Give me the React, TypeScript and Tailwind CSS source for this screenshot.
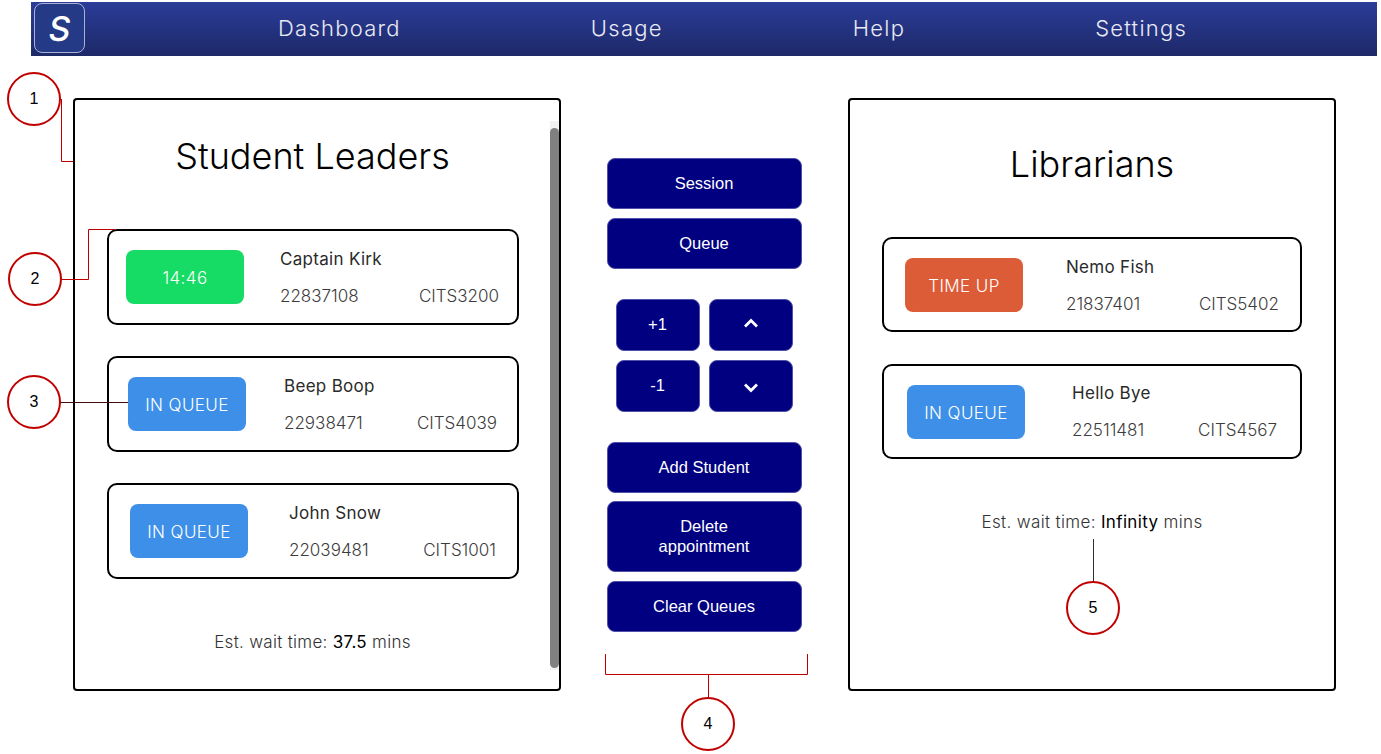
import React from "react";

const sans = "font-['Inter','Liberation_Sans',sans-serif]";

type Row = {
  label: string;
  pill: string;
  name: string;
  id: string;
  code: string;
  card: string;
  info: string;
  pad: string;
};

const leaders: Row[] = [
  { label: "14:46", pill: "bg-[#16dc66]", name: "Captain Kirk", id: "22837108", code: "CITS3200", card: "w-[412px] h-[96px]", info: "w-[219px] ml-[36px]", pad: "pl-[17px]" },
  { label: "IN QUEUE", pill: "bg-[#3d8fe8]", name: "Beep Boop", id: "22938471", code: "CITS4039", card: "w-[412px] h-[96px]", info: "w-[213px] ml-[38px]", pad: "pl-[19px]" },
  { label: "IN QUEUE", pill: "bg-[#3d8fe8]", name: "John Snow", id: "22039481", code: "CITS1001", card: "w-[412px] h-[96px]", info: "w-[207px] ml-[41px]", pad: "pl-[21px]" },
];

const librarians: Row[] = [
  { label: "TIME UP", pill: "bg-[#dd5c38]", name: "Nemo Fish", id: "21837401", code: "CITS5402", card: "w-[420px] h-[95px]", info: "w-[213px] ml-[43px] pt-[1px]", pad: "pl-[21px]" },
  { label: "IN QUEUE", pill: "bg-[#3d8fe8]", name: "Hello Bye", id: "22511481", code: "CITS4567", card: "w-[420px] h-[95px]", info: "w-[205px] ml-[47px]", pad: "pl-[23px]" },
];

function Card({ r }: { r: Row }) {
  return (
    <div className={`flex items-center rounded-[10px] border-2 border-black bg-white ${r.card} ${r.pad}`}>
      <div className={`flex h-[54px] w-[118px] shrink-0 items-center justify-center rounded-[8px] pt-[4px] text-[17px] font-light tracking-[0.4px] text-white ${r.pill}`}>
        {r.label}
      </div>
      <div className={r.info}>
        <div className="mb-[1px] text-[17px] leading-[20px] tracking-[0.3px] text-[#2a2a2a]">{r.name}</div>
        <div className="mt-[17px] flex justify-between text-[17px] font-light leading-[20px] text-[#3c3c3c]">
          <span>{r.id}</span>
          <span>{r.code}</span>
        </div>
      </div>
    </div>
  );
}

function Btn({ children, className }: { children: React.ReactNode; className: string }) {
  return (
    <button className={`flex items-center justify-center rounded-[8px] border border-[#5050a8] bg-[#000080] pb-[2px] text-center font-['Liberation_Sans',sans-serif] text-[16.5px] leading-[20px] font-medium text-white ${className}`}>
      {children}
    </button>
  );
}

function Chevron({ up }: { up?: boolean }) {
  return (
    <svg width="16" height="12" viewBox="0 0 16 12" className={up ? "mb-[3px]" : "mt-[5px]"}>
      <path d={up ? "M2 9.5 L8 3.5 L14 9.5" : "M2 2.5 L8 8.5 L14 2.5"} fill="none" stroke="white" strokeWidth="2.8" />
    </svg>
  );
}

function Marker({ n, className }: { n: string; className: string }) {
  return (
    <div className={`absolute flex h-[54px] w-[54px] items-center justify-center rounded-full border-2 border-[#c00000] bg-white font-['Liberation_Sans',sans-serif] text-[16px] text-black ${className}`}>
      {n}
    </div>
  );
}

export default function App() {
  return (
    <div className={`relative h-[754px] w-[1381px] overflow-hidden bg-white ${sans}`}>
      <nav className="mt-[2px] ml-[31px] flex h-[54px] w-[1346px] items-center bg-gradient-to-b from-[#2b3c99] to-[#1d2968] pl-[3px]">
        <div className="mb-[2px] flex h-[50px] w-[51px] items-center justify-center rounded-[8px] border border-[#a9b2d6] bg-[#243a86] text-[34px] font-medium text-white italic">
          S
        </div>
        <div className="mb-[2px] ml-[193px] flex gap-[190px] text-[22px] font-light tracking-[1.25px] text-[#e8eaf4]">
          <span>Dashboard</span>
          <span>Usage</span>
          <span>Help</span>
          <span>Settings</span>
        </div>
      </nav>

      <main className="mt-[42px] ml-[73px] flex">
        <section className="relative h-[593px] w-[488px] rounded-[4px] border-2 border-black px-[32px]">
          <h1 className="mt-[32px] pr-[9px] text-center text-[36px] leading-[48px] font-light whitespace-nowrap text-black">Student Leaders</h1>
          <div className="mt-[49px] flex flex-col gap-[31px]">
            {leaders.map((r) => (
              <Card key={r.name} r={r} />
            ))}
          </div>
          <p className="mt-[53px] pr-[9px] text-center text-[17px] leading-[20px] font-light tracking-[0.3px] text-[#333]">
            Est. wait time: <span className="font-normal text-black">37.5</span> mins
          </p>
          <div className="absolute top-[21px] right-0 h-[549px] w-[9px] bg-[#f1f1f1]">
            <div className="mt-[7px] h-[540px] w-full rounded-full bg-[#808080]" />
          </div>
        </section>

        <div className="flex w-[288px] flex-col items-center pt-[60px] pr-[2px]">
          <div className="flex flex-col gap-[9px]">
            <Btn className="h-[51px] w-[195px]">Session</Btn>
            <Btn className="h-[51px] w-[195px]">Queue</Btn>
          </div>
          <div className="mt-[30px] grid grid-cols-[84px_84px] gap-x-[9px] gap-y-[9px]">
            <Btn className="h-[52px]">+1</Btn>
            <Btn className="h-[52px]"><Chevron up /></Btn>
            <Btn className="h-[52px]">-1</Btn>
            <Btn className="h-[52px]"><Chevron /></Btn>
          </div>
          <div className="mt-[30px] flex flex-col gap-[8px]">
            <Btn className="h-[51px] w-[195px]">Add Student</Btn>
            <Btn className="h-[71px] w-[195px]">Delete<br />appointment</Btn>
            <Btn className="mt-[1px] h-[51px] w-[195px]">Clear Queues</Btn>
          </div>
        </div>

        <section className="-ml-[1px] h-[593px] w-[488px] rounded-[4px] border-2 border-black pl-[32px]">
          <h1 className="mt-[40px] w-[420px] text-center text-[36px] leading-[48px] font-light text-black">Librarians</h1>
          <div className="mt-[49px] flex flex-col gap-[32px]">
            {librarians.map((r) => (
              <Card key={r.name} r={r} />
            ))}
          </div>
          <p className="mt-[53px] w-[420px] text-center text-[17px] leading-[21px] font-light tracking-[0.35px] text-[#333]">
            Est. wait time: <span className="font-normal text-black">Infinity</span> mins
          </p>
        </section>
      </main>

      <svg className="absolute top-0 left-0" width="1381" height="754" fill="none">
        <path d="M61.5 99 V161.5 H73" stroke="#c00000" strokeWidth="1" />
        <path d="M61 279.5 H88.5 V229.5 H115" stroke="#c00000" strokeWidth="1" />
        <path d="M60 402.5 H128" stroke="#401010" strokeWidth="1" />
        <path d="M605.5 654 V674.5 H807.5 V654 M708.5 674 V698" stroke="#c00000" strokeWidth="1" />
        <path d="M1093.5 539 V582" stroke="#303030" strokeWidth="1" />
      </svg>
      <Marker n="1" className="top-[72px] left-[7px]" />
      <Marker n="2" className="top-[252px] left-[8px]" />
      <Marker n="3" className="top-[375px] left-[7px]" />
      <Marker n="4" className="top-[697px] left-[681px]" />
      <Marker n="5" className="top-[581px] left-[1066px]" />
    </div>
  );
}
